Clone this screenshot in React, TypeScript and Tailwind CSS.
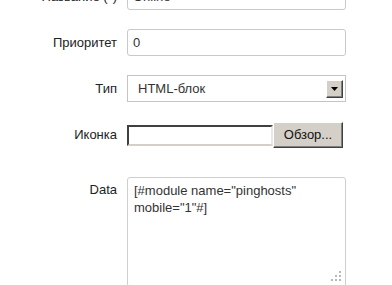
import React from "react";

function Grip() {
  // little dotted resize handle in the corner of the textarea
  const dots = [
    [10, 0],
    [10, 4],
    [6, 4],
    [10, 8],
    [6, 8],
    [2, 8],
  ];
  return (
    <svg
      width="13"
      height="11"
      viewBox="0 0 13 11"
      className="pointer-events-none absolute right-[3px] bottom-[4px]"
    >
      {dots.map(([x, y]) => (
        <rect key={`${x}-${y}`} x={x} y={y} width="2" height="2" fill="#b8b8b8" />
      ))}
    </svg>
  );
}

function Row({
  label,
  children,
  top = false,
  className = "",
}: {
  label: string;
  children: React.ReactNode;
  top?: boolean;
  className?: string;
}) {
  return (
    <div className={`flex ${top ? "items-start" : "items-center"} ${className}`}>
      <label
        className={`w-[117px] shrink-0 text-right leading-[16px] text-[#222] ${top ? "pt-[5px]" : ""}`}
      >
        {label}
      </label>
      <div className="ml-[10px]">{children}</div>
    </div>
  );
}

export default function App() {
  return (
    <div className="h-[285px] w-[392px] overflow-hidden bg-white font-['Liberation_Sans',Arial,sans-serif] text-[13px]">
      <div className="-mt-[17px] flex flex-col">
        <Row label="Название (*)">
          <div className="flex h-[27px] w-[219px] items-center rounded-[3px] border border-[#c9c9c9] pl-[5px] text-[#333]">
            Online
          </div>
        </Row>

        <Row label="Приоритет" className="mt-[19px]">
          <div className="flex h-[27px] w-[219px] items-center rounded-[3px] border border-[#c9c9c9] pl-[5px] text-[#333]">
            0
          </div>
        </Row>

        <Row label="Тип" className="mt-[19px]">
          <div className="flex h-[27px] w-[219px] items-center border border-[#c4c4c4] pl-[10px] pr-[2px] text-[#333]">
            <span className="flex-1">HTML-блок</span>
            <span className="flex h-[18px] w-[17px] items-center justify-center border border-t-white border-l-white border-r-[#404040] border-b-[#404040] bg-[#d4d0c8] shadow-[inset_-1px_-1px_0_#808080]">
              <svg width="7" height="4" viewBox="0 0 7 4">
                <path d="M0 0h7L3.5 4z" fill="#000" />
              </svg>
            </span>
          </div>
        </Row>

        <Row label="Иконка" className="mt-[20px]">
          <div className="flex items-center">
            <div className="h-[21px] w-[146px] border-2 border-t-[#404040] border-l-[#404040] border-r-[#e8e8e8] border-b-[#d4d0c8] bg-white" />
            <button
              type="button"
              className="h-[26px] w-[70px] border border-t-white border-l-white border-r-[#404040] border-b-[#404040] bg-[#d4d0c8] text-[13px] text-[#111] shadow-[inset_-1px_-1px_0_#808080]"
            >
              Обзор...
            </button>
          </div>
        </Row>

        <Row label="Data" top className="mt-[29px]">
          <div className="relative h-[110px] w-[219px] rounded-[3px] border border-[#cfcfcf] px-[6px] pt-[4px] leading-[17px] text-[#333]">
            [#module name="pinghosts"
            <br />
            mobile="1"#]
            <Grip />
          </div>
        </Row>
      </div>
    </div>
  );
}
